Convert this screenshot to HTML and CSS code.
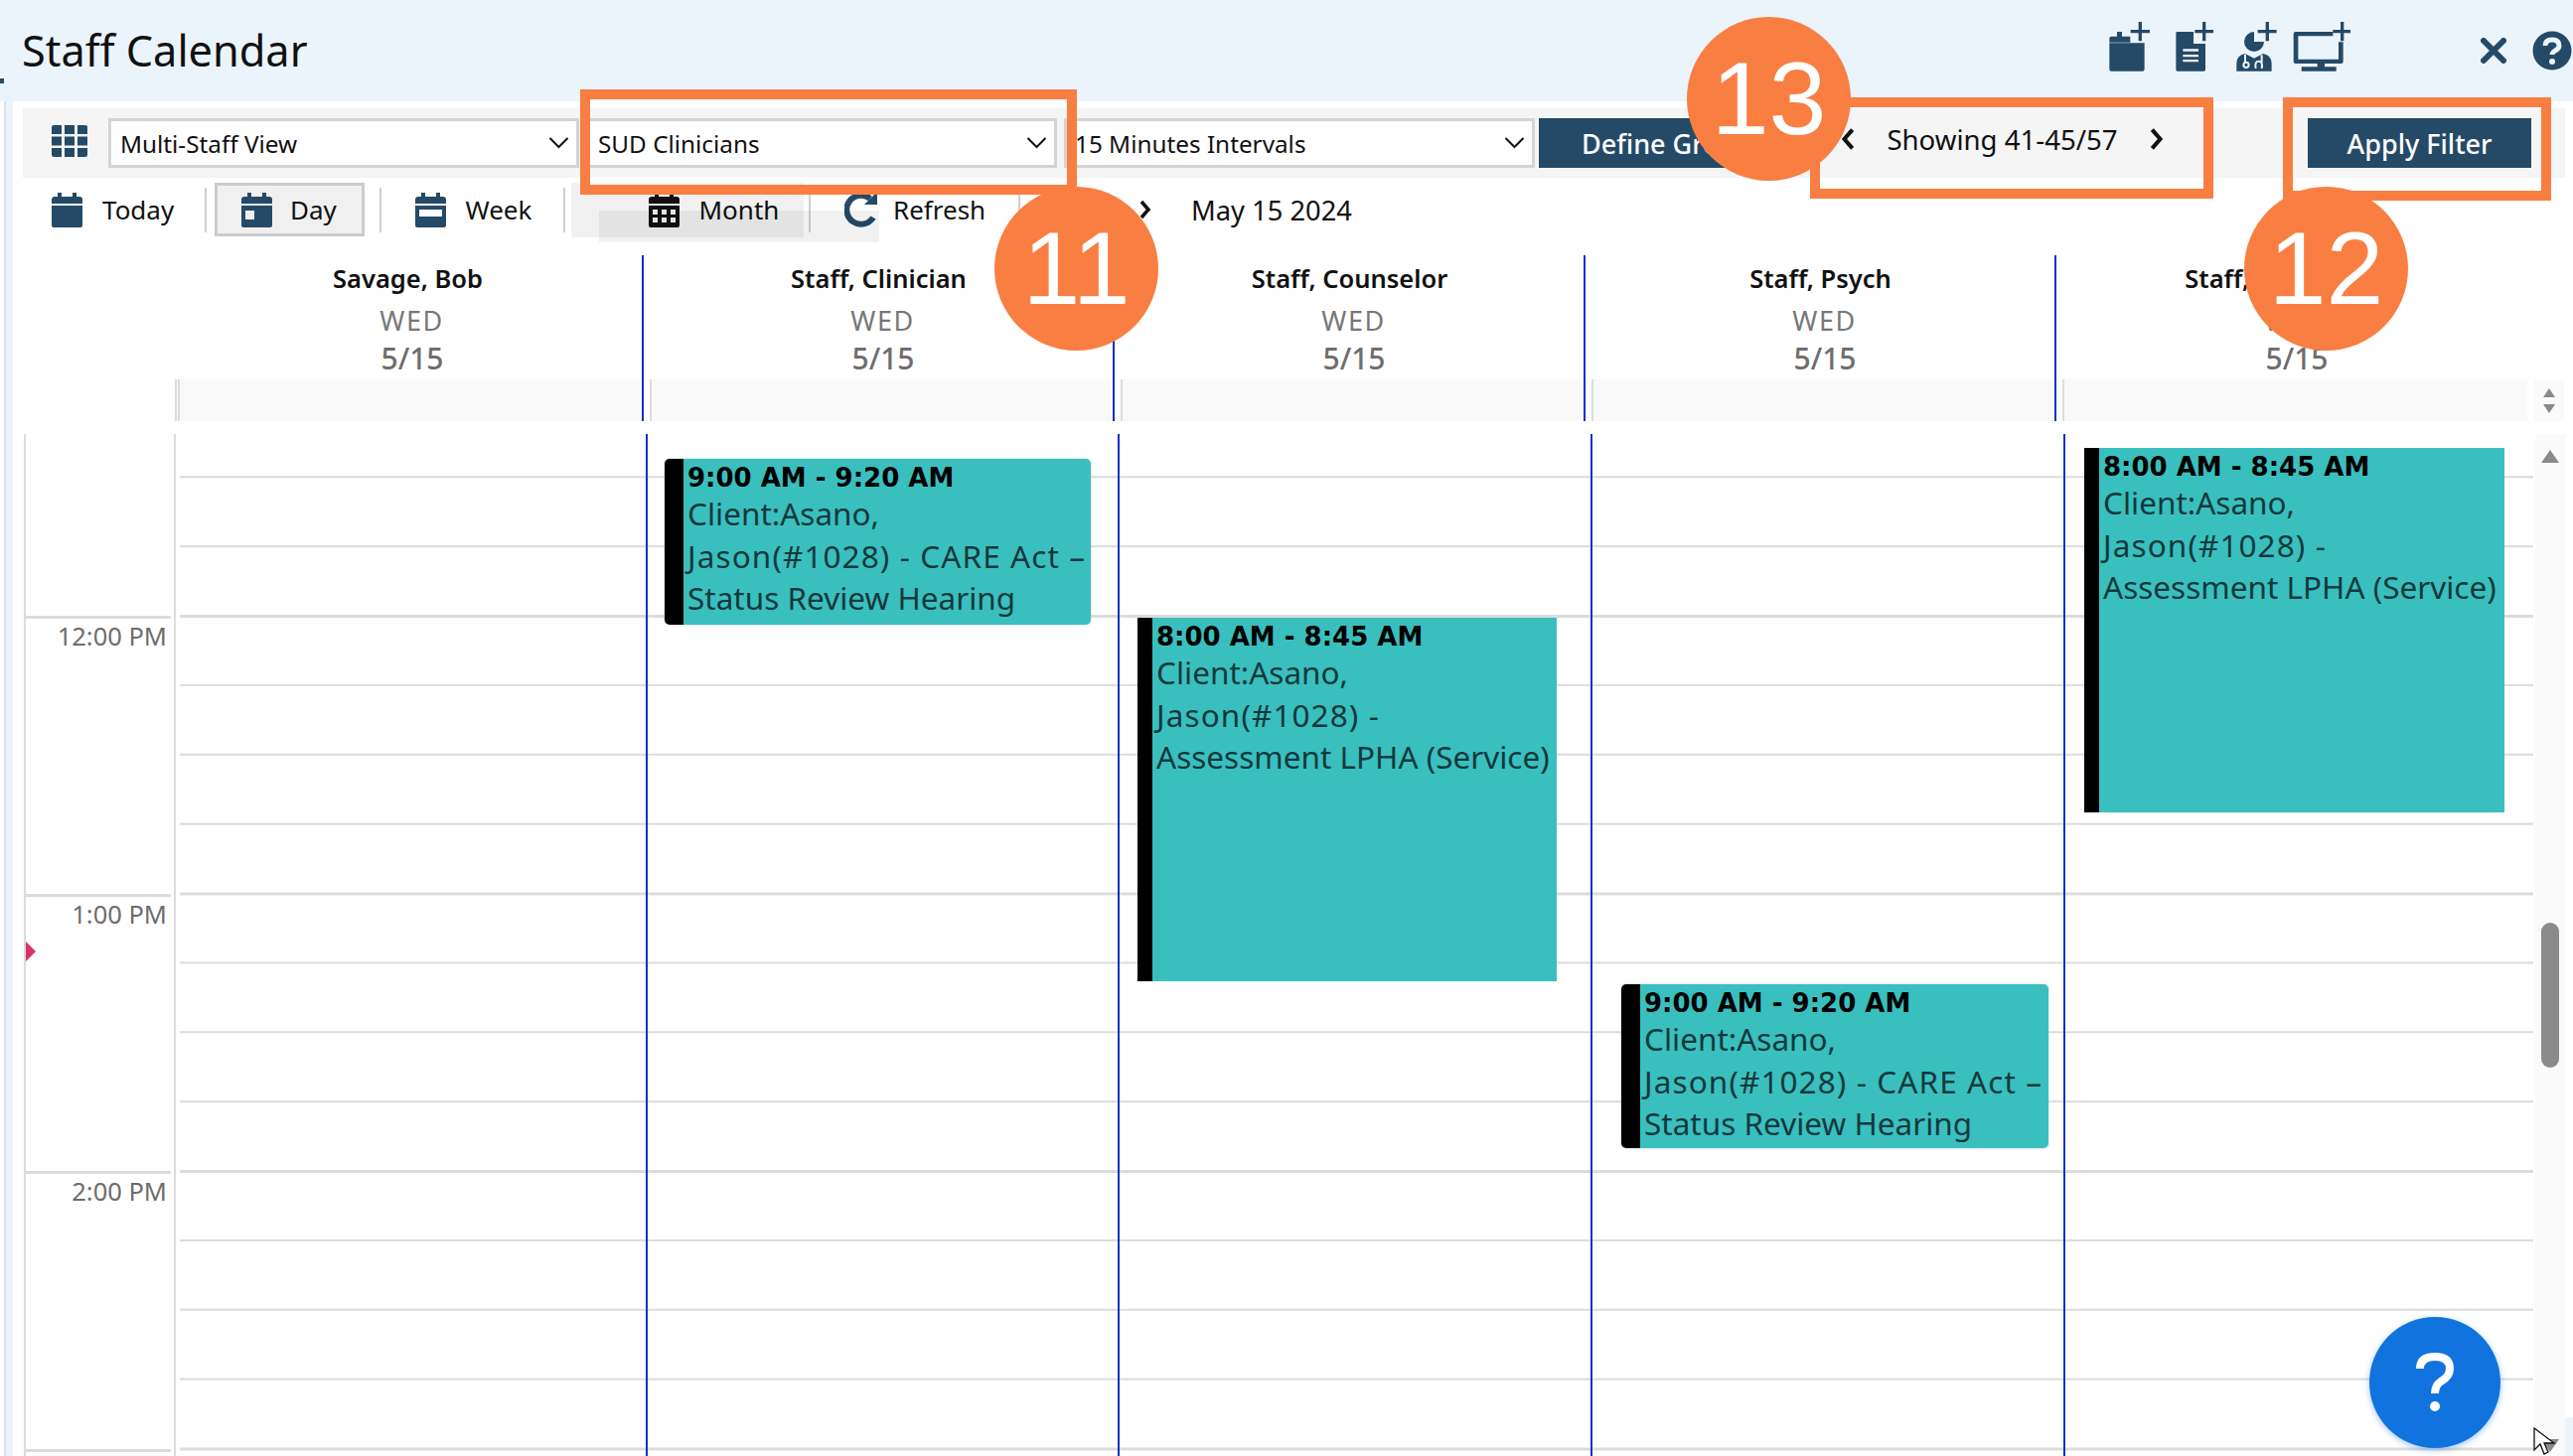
FILE: index.html
```html
<!DOCTYPE html>
<html lang="en">
<head>
<meta charset="utf-8">
<title>Staff Calendar</title>
<link rel="stylesheet" href="styles.css">
</head>
<body>
<div class="app">
  <header class="topbar">
    <h1 class="title">Staff Calendar</h1>
    <div class="top-icons">
      <svg class="ti ti-cal" viewBox="120 60 130 160"><path class="ink" d="M124 130h106v79q0 6-6 6h-94q-6 0-6-6zM124 128v-12q0-6 6-6h17V96h15v14h25v18z"/><path class="ink" d="M188 90h24V66h10v24h24v10h-24v24h-10v-24h-24z"/></svg>
      <svg class="ti ti-doc" viewBox="320 60 125 160"><path class="ink" d="M327 100q0-4 4-4h49v36h36v79q0 4-4 4h-81q-4 0-4-4z"/><path class="cut" d="M348 148h47v7h-47zM348 165h47v7h-47zM348 180h47v7h-47z"/><path class="ink" d="M384 90h23V66h10v24h23v10h-23v24h-10v-24h-23z"/></svg>
      <svg class="ti ti-doc2" viewBox="510 60 130 160"><circle class="ink" cx="567" cy="126" r="30"/><path class="cut" d="M567 126V84h40v42z"/><path class="ink" d="M514 215v-24q0-24 26-29l27 14 27-14q26 5 26 29v24z"/><circle class="cutline" cx="543" cy="196" r="8"/><path class="cutline" d="M572 207q-4-22 9-22t9 22M540 188v-24M590 190v-24"/><path class="ink" d="M578 90h24V66h10v24h23v10h-23v24h-10v-24h-24z"/></svg>
      <svg class="ti ti-mon" viewBox="684 60 176 160"><path class="ink" d="M692 96h113v13H700v70h122v-52h14v59q0 6-6 6H692q-6 0-6-6V102q0-6 6-6zM758 192h22v10h35v13H710v-13h48z"/><path class="ink" d="M805 90h23V66h10v24h20v10h-20v24h-10v-24h-23z"/></svg>
    </div>
    <svg class="ti-x" viewBox="0 0 26 26"><path d="M3 3l20 20M23 3L3 23"/></svg>
    <svg class="ti-help" viewBox="0 0 40 40"><circle cx="20" cy="20" r="19.5"/><path class="q" d="M13 15q0-6 7-6t7 6q0 3-4 5-3 2-3 4"/><circle class="qd" cx="20" cy="31" r="3"/></svg>
  </header>

  <main class="panel">
    <div class="filters">
      <svg class="grid-icon" viewBox="0 0 36 32"><path d="M0 2q0-2 2-2h8v9H0zM13 0h10v9H13zM26 0h8q2 0 2 2v7H26zM0 11.500h10v9H0zM13 11.500h10v9H13zM26 11.500h10v9H26zM0 23h10v9H2q-2 0-2-2zM13 23h10v9H13zM26 23h10v7q0 2-2 2h-8z"/></svg>
      <div class="select s1"><span>Multi-Staff View</span><svg class="chev" viewBox="0 0 20 12"><path d="M1 1l9 9 9-9"/></svg></div>
      <div class="select s2"><span>SUD Clinicians</span><svg class="chev" viewBox="0 0 20 12"><path d="M1 1l9 9 9-9"/></svg></div>
      <div class="select s3"><span>15 Minutes Intervals</span><svg class="chev" viewBox="0 0 20 12"><path d="M1 1l9 9 9-9"/></svg></div>
      <button class="btn define">Define Group</button>
      <div class="pager">
        <svg class="pg" viewBox="0 0 12 20"><path d="M10 2L3 10l7 8"/></svg>
        <span>Showing 41-45/57</span>
        <svg class="pg" viewBox="0 0 12 20"><path d="M2 2l7 8-7 8"/></svg>
      </div>
      <button class="btn apply">Apply Filter</button>
    </div>

    <nav class="views">
      <div class="view v-today">
        <svg class="cal" viewBox="0 0 31 35"><path d="M6 0h4v4h11V0h4v4h3q3 0 3 3v4H0V7q0-3 3-3h3zM0 13h31v20q0 2-2 2H2q-2 0-2-2z"/></svg>
        <span>Today</span>
      </div>
      <i class="sep"></i>
      <div class="view v-day active">
        <svg class="cal" viewBox="0 0 31 35"><path fill-rule="evenodd" d="M6 0h4v4h11V0h4v4h3q3 0 3 3v4H0V7q0-3 3-3h3zM0 13h31v20q0 2-2 2H2q-2 0-2-2zM4 18v9h9v-9z"/></svg>
        <span>Day</span>
      </div>
      <i class="sep"></i>
      <div class="view v-week">
        <svg class="cal" viewBox="0 0 31 35"><path fill-rule="evenodd" d="M6 0h4v4h11V0h4v4h3q3 0 3 3v4H0V7q0-3 3-3h3zM0 13h31v20q0 2-2 2H2q-2 0-2-2zM4 17v7h23v-7z"/></svg>
        <span>Week</span>
      </div>
      <i class="sep"></i>
      <div class="view v-month">
        <svg class="cal black" viewBox="0 0 31 35"><path fill-rule="evenodd" d="M6 0h4v4h11V0h4v4h3q3 0 3 3v4H0V7q0-3 3-3h3zM0 13h31v20q0 2-2 2H2q-2 0-2-2zM4 17v5h5v-5zM13 17v5h5v-5zM22 17v5h5v-5zM4 25v5h5v-5zM13 25v5h5v-5zM22 25v5h5v-5z"/></svg>
        <span>Month</span>
      </div>
      <i class="sep"></i>
      <div class="view v-refresh">
        <svg class="refresh" viewBox="0 0 34 36"><path class="r-arc" d="M26 7A14.500 14.500 0 1 0 29 26"/><path class="r-head" d="M20 13L33 13V0z"/></svg>
        <span>Refresh</span>
      </div>
      <i class="sep"></i>
      <svg class="next" viewBox="0 0 12 20"><path d="M2 2l7 8-7 8"/></svg>
      <span class="date">May 15 2024</span>
    </nav>

    <section class="heads">
      <div class="head">
        <div class="name">Savage, Bob</div><div class="dow">WED</div><div class="md">5/15</div><div class="strip"></div>
      </div>
      <div class="head">
        <div class="name">Staff, Clinician</div><div class="dow">WED</div><div class="md">5/15</div><div class="strip"></div>
      </div>
      <div class="head">
        <div class="name">Staff, Counselor</div><div class="dow">WED</div><div class="md">5/15</div><div class="strip"></div>
      </div>
      <div class="head">
        <div class="name">Staff, Psych</div><div class="dow">WED</div><div class="md">5/15</div><div class="strip"></div>
      </div>
      <div class="head">
        <div class="name">Staff, Psychiatrist</div><div class="dow">WED</div><div class="md">5/15</div><div class="strip"></div>
      </div>
      <div class="head-scroll"><i class="tri up"></i><i class="tri down"></i></div>
    </section>

    <section class="body">
      <div class="times">
        <div class="hour">12:00 PM</div>
        <div class="hour">1:00 PM</div>
        <div class="hour">2:00 PM</div>
        <div class="hour"></div>
        <i class="now"></i>
      </div>
      <div class="days">
        <div class="day"></div>
        <div class="day">
          <article class="event e1">
            <b>9:00 AM - 9:20 AM</b>
            <p>Client:Asano,<br><span class="wide">Jason(#1028) - CARE Act –</span><br>Status Review Hearing</p>
          </article>
        </div>
        <div class="day">
          <article class="event e2">
            <b>8:00 AM - 8:45 AM</b>
            <p>Client:Asano,<br><span class="wide">Jason(#1028) -</span><br>Assessment LPHA (Service)</p>
          </article>
        </div>
        <div class="day">
          <article class="event e3">
            <b>9:00 AM - 9:20 AM</b>
            <p>Client:Asano,<br><span class="wide">Jason(#1028) - CARE Act –</span><br>Status Review Hearing</p>
          </article>
        </div>
        <div class="day">
          <article class="event e4">
            <b>8:00 AM - 8:45 AM</b>
            <p>Client:Asano,<br><span class="wide">Jason(#1028) -</span><br>Assessment LPHA (Service)</p>
          </article>
        </div>
      </div>
      <div class="vscroll">
        <i class="tri up big"></i>
        <i class="thumb"></i>
        <i class="tri down big"></i>
      </div>
    </section>
  </main>

  <i class="ghost g1"></i>
  <i class="ghost g2"></i>
  <i class="edge-mark"></i>

  <i class="box box11"></i>
  <i class="box box12"></i>
  <i class="box box13"></i>
  <div class="badge b11">11</div>
  <div class="badge b12">12</div>
  <div class="badge b13">13</div>

  <div class="fab"><svg viewBox="0 0 40 60"><path d="M5 16q0-12 15-12t15 12q0 8-9 13-6 4-6 12"/><circle cx="20" cy="54" r="5"/></svg></div>
  <i class="corner"></i>
  <svg class="cursor" viewBox="0 0 26 30"><path d="M1 1v22l6-6 4 10 4-2-4-9h10z"/></svg>
</div>
</body>
</html>
```

FILE: styles.css
```css
* { box-sizing: border-box; }
html, body { margin: 0; padding: 0; background: #fff; }
body { font-family: "Noto Sans", Roboto, sans-serif; color: #111; }
i { display: block; }

.app {
  position: relative;
  width: 2590px;
  height: 1466px;
  overflow: hidden;
  background: #fff;
  padding-left: 4px;
  display: flex;
  flex-direction: column;
}
.app::before {
  content: "";
  position: absolute;
  left: 4px; top: 0; bottom: 0;
  width: 9px;
  background: #ecf4fb;
  border-left: 2px solid #dcdfe3;
}

/* header */
.topbar {
  position: relative;
  height: 102px;
  margin-left: -4px;
  padding-left: 22px;
  background: #ecf4fb;
  display: flex;
  align-items: center;
  flex: none;
}
.title { margin: 0; font-size: 43.300px; font-weight: 400; line-height: 102px; color: #111; }
.top-icons { display: flex; margin-left: auto; align-items: flex-start; align-self: flex-start; height: 72px; padding-top: 20px; }
.ti { display: block; height: 53.300px; }
.ti-cal { width: 43.300px; margin-right: 23px; }
.ti-doc { width: 41.700px; margin-right: 20px; }
.ti-doc2 { width: 43.300px; margin-right: 15px; }
.ti-mon { width: 58.700px; }
.ink { fill: #254a67; }
.cut { fill: #ecf4fb; }
.cutline { fill: none; stroke: #ecf4fb; stroke-width: 6; }
.ti-x { width: 26px; height: 26px; margin-left: 130px; }
.ti-x path { fill: none; stroke: #254a67; stroke-width: 6px; stroke-linecap: round; }
.ti-help { width: 40px; height: 40px; margin-left: 26px; margin-right: 1px; }
.ti-help circle:first-child { fill: #254a67; }
.ti-help .q { fill: none; stroke: #ecf4fb; stroke-width: 5px; }
.ti-help .qd { fill: #ecf4fb; }

/* panel */
.panel {
  position: relative;
  margin-left: 9px;
  flex: 1;
  background: #fff;
  min-height: 0;
  padding-top: 7px;
}

.filters {
  margin-left: 10px;
  width: 2559px;
  height: 70px;
  background: #f5f5f5;
  display: flex;
  align-items: center;
  padding-left: 29px;
}
.grid-icon { width: 36px; height: 32px; fill: #254a67; margin-top: -4px; margin-right: 21px; flex: none; }
.select {
  width: 474px;
  height: 50px;
  margin-right: 7px;
  background: #fff;
  border: 3px solid #d4d4d4;
  display: flex;
  align-items: center;
  justify-content: space-between;
  padding: 0 7px 0 9px;
  font-size: 24.300px;
  color: #111;
  flex: none;
}
.select span { white-space: nowrap; }
.chev { width: 21px; height: 12px; }
.chev path { fill: none; stroke: #111; stroke-width: 2px; }
.s3 { margin-right: 4px; padding-left: 8px; }
.btn {
  height: 50px;
  border: 0;
  background: #254a67;
  color: #fff;
  font: 500 27px "Noto Sans", Roboto, sans-serif;
  padding: 0;
  flex: none;
}
.define { width: 240px; text-align: left; padding-left: 43px; white-space: nowrap; }
.pager {
  display: flex;
  align-items: center;
  justify-content: space-between;
  width: 325px;
  margin-left: 64px;
  height: 50px;
  margin-top: -8px;
  font-size: 27.600px;
  flex: none;
  white-space: nowrap;
}
.pg { width: 14px; height: 24px; }
.pg path { fill: none; stroke: #111; stroke-width: 3.500px; }
.apply { width: 225px; margin-left: 145px; }

/* views row */
.views {
  height: 54px;
  margin-top: 5px;
  display: flex;
  align-items: center;
  padding-left: 39px;
  position: relative;
  font-size: 26px;
}
.view { display: flex; align-items: center; height: 54px; flex: none; }
.view span { margin-left: 20px; }
.cal { width: 31px; height: 35px; fill: #254a67; }
.cal.black { fill: #111; }
.sep { width: 2px; height: 45px; background: #d0d0d0; flex: none; }
.v-today { width: 153.500px; }
.v-day { width: 151px; margin-left: 8px; margin-right: 15px; padding-left: 24px; background: #f0f0f0; border: 3px solid #ccc; }
.v-day span { margin-left: 18.500px; }
.v-week { width: 183px; padding-left: 34px; }
.v-month { width: 245px; padding-left: 84px; }
.v-refresh { width: 209px; padding-left: 34.500px; }
.v-refresh span { margin-left: 15px; }
.refresh { width: 34px; height: 36px; }
.r-arc { fill: none; stroke: #254a67; stroke-width: 6px; }
.r-head { fill: #254a67; }
.next { width: 12px; height: 20px; margin-left: 120px; }
.next path { fill: none; stroke: #111; stroke-width: 3.500px; }
.date { margin-left: 40.500px; font-size: 27.300px; }

/* column heads */
.heads {
  display: grid;
  grid-template-columns: repeat(5, 474px) 1fr;
  margin-top: 19px;
  margin-left: 160.500px;
  height: 167px;
}
.head { border-right: 2px solid #1530c8; display: flex; flex-direction: column; align-items: center; }
.head:nth-child(5) { border-right: 0; }
.name { font-size: 25.500px; font-weight: 600; line-height: 46px; margin-left: 2px; color: #111; white-space: nowrap; }
.dow { font-size: 27px; letter-spacing: 1.500px; color: #777; line-height: 40px; padding-left: 10px; }
.md { font-size: 30px; color: #6e6e6e; font-weight: 500; line-height: 36px; padding-left: 11px; }
.strip { margin-top: auto; width: calc(100% - 6px); height: 42px; margin-left: 6px; background: #f9f9f9; border-left: 2px solid #ddd; }
.head:first-child .strip { width: calc(100% - 2px); margin-left: 2px; border-left: 5px double #ddd; }
.head-scroll { margin-top: 125px; margin-left: 7px; width: 30px; height: 42px; background: #fafafa; display: flex; flex-direction: column; align-items: center; justify-content: center; gap: 7px; }

.tri { width: 0; height: 0; border-left: 6px solid transparent; border-right: 6px solid transparent; }
.tri.up { border-bottom: 9px solid #8a8a8a; }
.tri.down { border-top: 9px solid #8a8a8a; }
.tri.big { border-left-width: 9px; border-right-width: 9px; }
.tri.big.up { border-bottom-width: 13px; margin-top: 16px; }
.tri.big.down { border-top-width: 13px; margin-top: auto; }

/* body */
.body {
  display: flex;
  margin-top: 13px;
  margin-left: 11px;
  height: 1029px;
}
.times {
  position: relative;
  width: 153px;
  flex: none;
  padding-top: 183px;
  border-left: 2px solid #dcdcdc;
  border-right: 2px solid #dcdcdc;
}
.hour {
  height: 279.500px;
  margin-right: 3px;
  border-top: 3px solid #dcdcdc;
  padding: 1px 4px 0 0;
  text-align: right;
  font-size: 25.500px;
  line-height: 32px;
  color: #6d6d6d;
}
.now {
  position: absolute;
  left: 0; top: 511px;
  width: 10px; height: 20px;
  background: #d8336f;
  clip-path: polygon(0 0, 100% 50%, 0 100%);
}
.days {
  margin-left: 4px;
  width: 2369px;
  display: grid;
  grid-template-columns: 469px 475px 476px 476px 473px;
  flex: none;
}
.day {
  position: relative;
  border-left: 2px solid #1530c8;
  background-image:
    linear-gradient(to bottom, #dcdcdc 0 3px, transparent 3px 69.800px, #dcdcdc 69.800px 72px, transparent 72px 139.700px, #dcdcdc 139.700px 142px, transparent 142px 209.600px, #dcdcdc 209.600px 212px, transparent 212px);
  background-size: 100% 279.500px;
  background-position: 0 182px;
}
.day:first-child { border-left: 0; }
.event {
  position: absolute;
  background: #3abfbf;
  border-left: 19px solid #000;
  border-radius: 5px;
  padding: 4px 0 0 4px;
  overflow: hidden;
  white-space: nowrap;
  color: #12393c;
}
.event b { display: block; font: 700 26px/30px "DejaVu Sans", "Noto Sans", sans-serif; color: #000; }
.event p { margin: 0; font-size: 31.500px; line-height: 42.500px; }
.wide { letter-spacing: 1.100px; }
.e1 { left: 17px; top: 25px; width: 429px; height: 167px; box-shadow: 0 0 3px #ccc; }
.e2 { left: 18px; top: 185px; width: 422px; height: 366px; border-left-width: 15px; border-radius: 0; }
.e3 { left: 29px; top: 554px; width: 430px; height: 165px; box-shadow: 0 0 3px #ccc; }
.e4 { left: 19px; top: 14px; width: 423px; height: 367px; border-left-width: 15px; border-radius: 0; }

.vscroll {
  margin-left: 2px;
  width: 30px;
  background: #fafafa;
  display: flex;
  flex-direction: column;
  align-items: center;
  flex: none;
  padding-bottom: 4px;
}
.thumb { width: 18px; height: 146px; margin-top: 463px; border-radius: 9px; background: #8a8a8a; }

/* overlays */
.ghost { position: absolute; background: rgba(0,0,0,.055); pointer-events: none; }
.g1 { left: 575px; top: 184px; width: 234px; height: 55px; }
.g2 { left: 603px; top: 212px; width: 282px; height: 32px; }
.edge-mark { position: absolute; left: 0; top: 79px; width: 4px; height: 5px; background: #254a67; }

.box { position: absolute; border: 10px solid #f97e42; }
.box11 { left: 584px; top: 90px; width: 500px; height: 106px; }
.box12 { left: 2298px; top: 98px; width: 270px; height: 104px; }
.box13 { left: 1822px; top: 98px; width: 406px; height: 102px; }

.badge {
  position: absolute;
  width: 165px; height: 165px;
  border-radius: 50%;
  background: #f97e42;
  color: #fff;
  font: 400 104px/165px "Liberation Sans", sans-serif;
  text-align: center;
}
.b11 { left: 1001px; top: 188px; }
.b12 { left: 2259px; top: 188px; }
.b13 { left: 1698px; top: 17px; }

.fab {
  position: absolute;
  left: 2385px; top: 1326px;
  width: 132px; height: 132px;
  border-radius: 50%;
  background: #1173de;
  box-shadow: 0 2px 6px rgba(17,115,222,.4);
  display: flex;
  align-items: center;
  justify-content: center;
}
.fab svg { width: 40px; height: 60px; }
.fab path { fill: none; stroke: #fff; stroke-width: 8px; }
.fab circle { fill: #fff; }

.corner { position: absolute; right: 0; top: 1427px; width: 8px; height: 39px; background: #ecf4fb; }
.cursor { position: absolute; left: 2550px; top: 1437px; width: 26px; height: 30px; }
.cursor path { fill: #fff; stroke: #111; stroke-width: 1.300px; }
```
